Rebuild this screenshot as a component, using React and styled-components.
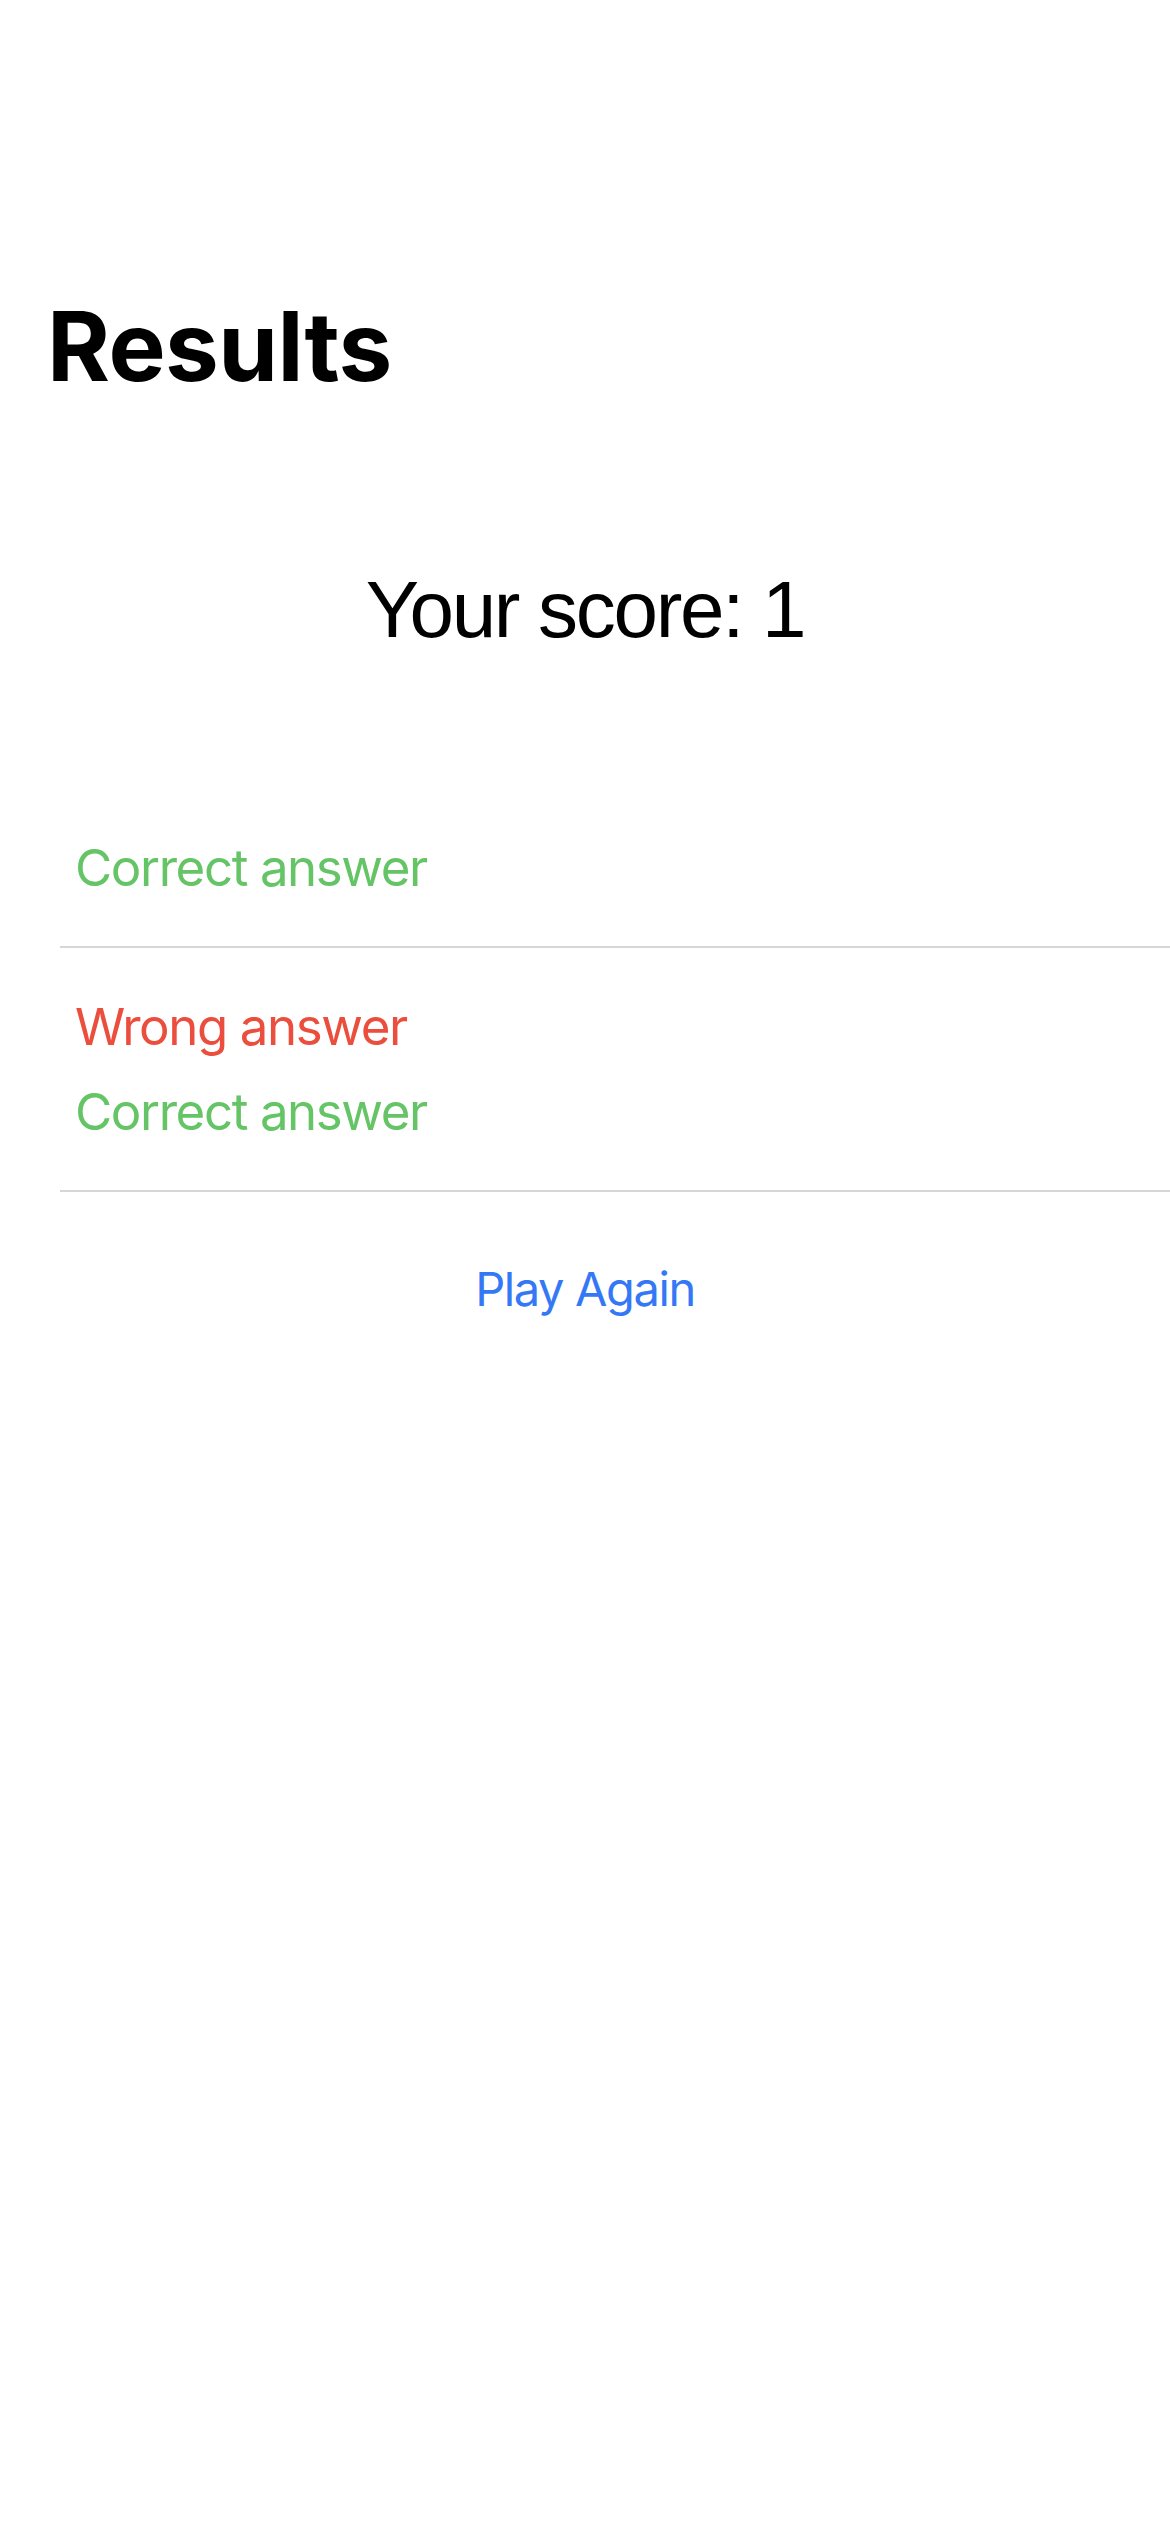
import React from "react";
import styled, { createGlobalStyle } from "styled-components";

const GlobalStyle = createGlobalStyle`
  html, body {
    margin: 0;
    padding: 0;
    background: #fff;
  }
  body {
    font-family: Inter, "Noto Sans", sans-serif;
    color: #000;
  }
`;

const Screen = styled.main`
  width: 1170px;
  min-height: 2532px;
  display: flex;
  flex-direction: column;
  background: #fff;
`;

const Title = styled.h1`
  margin: 0;
  padding: 288px 0 0 47px;
  font-family: Inter, sans-serif;
  font-weight: 700;
  font-size: 96px;
  line-height: 116px;
  letter-spacing: -0.5px;
`;

const Score = styled.div`
  margin-top: 161px;
  text-align: center;
  font-family: "Liberation Sans", Arial, sans-serif;
  font-size: 80px;
  line-height: 90px;
  letter-spacing: -2.3px;
`;

const List = styled.ul`
  list-style: none;
  margin: 134px 0 0 60px;
  padding: 0;
`;

const Row = styled.li`
  display: flex;
  flex-direction: column;
  gap: 23px;
  padding: 48px 15px 47px;
  border-bottom: 2px solid #d6d6d8;
`;

const Answer = styled.span`
  font-family: Inter, sans-serif;
  font-size: 51px;
  line-height: 62px;
  letter-spacing: -1.4px;
  color: ${(p) => (p.$correct ? "#65c466" : "#eb4e3d")};
`;

const PlayAgain = styled.button`
  align-self: center;
  margin-top: 68px;
  padding: 0;
  border: none;
  background: none;
  font-family: Inter, sans-serif;
  font-size: 47px;
  line-height: 58px;
  letter-spacing: -1.4px;
  color: #3478f6;
  cursor: pointer;
`;

const results = [
  [{ correct: true, text: "Correct answer" }],
  [
    { correct: false, text: "Wrong answer" },
    { correct: true, text: "Correct answer" },
  ],
];

export default function App() {
  return (
    <Screen>
      <GlobalStyle />
      <Title>Results</Title>
      <Score>Your score: 1</Score>
      <List>
        {results.map((row, i) => (
          <Row key={i}>
            {row.map((a, j) => (
              <Answer key={j} $correct={a.correct}>
                {a.text}
              </Answer>
            ))}
          </Row>
        ))}
      </List>
      <PlayAgain>Play Again</PlayAgain>
    </Screen>
  );
}
